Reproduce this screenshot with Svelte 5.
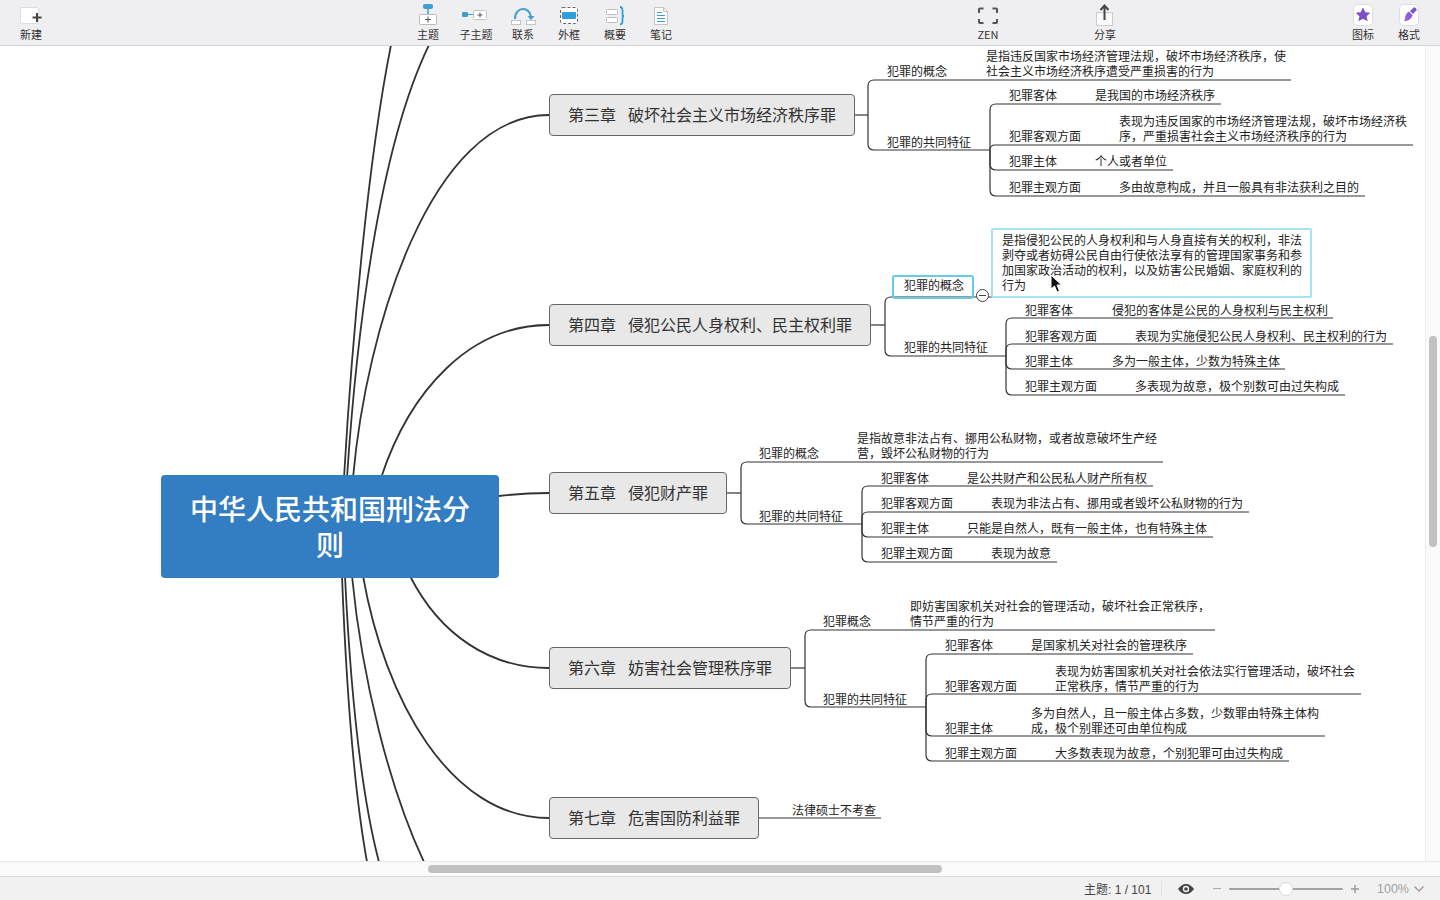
<script>
  const chapters = [
    { x: 549, w: 306, cy: 115, h: 42, a: '第三章', b: '破坏社会主义市场经济秩序罪', bx: 868,
      concept: { label: '犯罪的概念', x: 887, cy: 71, y: 80, tx: 986, end: 1291,
        lines: ['是指违反国家市场经济管理法规，破坏市场经济秩序，使', '社会主义市场经济秩序遭受严重损害的行为'] },
      common: { x: 887, cy: 142, y: 150, end: 990 },
      items: [
        { cy: 95, y: 104, tx: 1095, end: 1221, lines: ['是我国的市场经济秩序'] },
        { cy: 136, y: 145, tx: 1119, end: 1413, lines: ['表现为违反国家的市场经济管理法规，破坏市场经济秩', '序，严重损害社会主义市场经济秩序的行为'] },
        { cy: 161, y: 170, tx: 1095, end: 1173, lines: ['个人或者单位'] },
        { cy: 187, y: 196, tx: 1119, end: 1365, lines: ['多由故意构成，并且一般具有非法获利之目的'] }
      ] },
    { x: 549, w: 322, cy: 325, h: 42, a: '第四章', b: '侵犯公民人身权利、民主权利罪', bx: 885,
      concept: { label: '犯罪的概念', x: 904, cy: 285, y: 297, tx: 1002, end: 1302,
        lines: ['是指侵犯公民的人身权利和与人身直接有关的权利，非法', '剥夺或者妨碍公民自由行使依法享有的管理国家事务和参', '加国家政治活动的权利，以及妨害公民婚姻、家庭权利的', '行为'] },
      common: { x: 904, cy: 347, y: 356, end: 1006 },
      items: [
        { cy: 310, y: 318, tx: 1112, end: 1333, lines: ['侵犯的客体是公民的人身权利与民主权利'] },
        { cy: 336, y: 344, tx: 1135, end: 1393, lines: ['表现为实施侵犯公民人身权利、民主权利的行为'] },
        { cy: 361, y: 369, tx: 1112, end: 1285, lines: ['多为一般主体，少数为特殊主体'] },
        { cy: 386, y: 395, tx: 1135, end: 1345, lines: ['多表现为故意，极个别数可由过失构成'] }
      ] },
    { x: 549, w: 178, cy: 493, h: 42, a: '第五章', b: '侵犯财产罪', bx: 741,
      concept: { label: '犯罪的概念', x: 759, cy: 453, y: 462, tx: 857, end: 1163,
        lines: ['是指故意非法占有、挪用公私财物，或者故意破坏生产经', '营，毁坏公私财物的行为'] },
      common: { x: 759, cy: 516, y: 524, end: 862 },
      items: [
        { cy: 478, y: 486, tx: 967, end: 1153, lines: ['是公共财产和公民私人财产所有权'] },
        { cy: 503, y: 512, tx: 991, end: 1249, lines: ['表现为非法占有、挪用或者毁坏公私财物的行为'] },
        { cy: 528, y: 537, tx: 967, end: 1213, lines: ['只能是自然人，既有一般主体，也有特殊主体'] },
        { cy: 553, y: 562, tx: 991, end: 1057, lines: ['表现为故意'] }
      ] },
    { x: 549, w: 242, cy: 668, h: 42, a: '第六章', b: '妨害社会管理秩序罪', bx: 805,
      concept: { label: '犯罪概念', x: 823, cy: 621, y: 630, tx: 910, end: 1215,
        lines: ['即妨害国家机关对社会的管理活动，破坏社会正常秩序，', '情节严重的行为'] },
      common: { x: 823, cy: 699, y: 707, end: 926 },
      items: [
        { cy: 645, y: 654, tx: 1031, end: 1193, lines: ['是国家机关对社会的管理秩序'] },
        { cy: 686, y: 694, tx: 1055, end: 1361, lines: ['表现为妨害国家机关对社会依法实行管理活动，破坏社会', '正常秩序，情节严重的行为'] },
        { cy: 728, y: 736, tx: 1031, end: 1325, lines: ['多为自然人，且一般主体占多数，少数罪由特殊主体构', '成，极个别罪还可由单位构成'] },
        { cy: 753, y: 761, tx: 1055, end: 1289, lines: ['大多数表现为故意，个别犯罪可由过失构成'] }
      ] }
  ];
  const itemLabels = ['犯罪客体', '犯罪客观方面', '犯罪主体', '犯罪主观方面'];
  const CANVAS_TOP = 46;
  const LH = 15;
  const TEXT_NUDGE = 0.5;

  function elbow(x, from, y, end) {
    const d = y - from;
    const r = Math.min(6, Math.abs(d));
    const s = Math.sign(d) || 1;
    return `M${x} ${from}V${y - s * r}Q${x} ${y} ${x + r} ${y}H${end}`;
  }
  const treePaths = chapters.flatMap((c) => [
    `M${c.x + c.w} ${c.cy}H${c.bx}`,
    elbow(c.bx, c.cy, c.concept.y, c.concept.end),
    elbow(c.bx, c.cy, c.common.y, c.common.end),
    ...c.items.map((it) => elbow(c.common.end, c.common.y, it.y, it.end))
  ]);
  const texts = chapters.flatMap((c) => [
    { x: c.concept.x, cy: c.concept.cy, lines: [c.concept.label] },
    { x: c.concept.tx, cy: c.concept.cy, lines: c.concept.lines },
    { x: c.common.x, cy: c.common.cy, lines: ['犯罪的共同特征'] },
    ...c.items.flatMap((it, i) => [
      { x: c.common.end + 19, cy: it.cy, lines: [itemLabels[i]] },
      { x: it.tx, cy: it.cy, lines: it.lines }
    ])
  ]);
  texts.push({ x: 792, cy: 810, lines: ['法律硕士不考查'] });
  const boxes = [...chapters, { x: 549, w: 210, cy: 818, h: 42, a: '第七章', b: '危害国防利益罪' }];

  const mainPaths = [
    'M344 478C352 340 368 160 391 45',
    'M347 478C356 340 378 150 429 45',
    'M353 478C366 330 430 115 549 115',
    'M381 478C410 390 470 325 549 325',
    'M499 496C515 494 530 493 549 493',
    'M410 576C440 635 490 668 549 668',
    'M363 576C385 700 450 818 549 818',
    'M352 576C362 680 390 790 424 862',
    'M345 576C350 680 360 790 379 862',
    'M342 576C346 680 354 790 367 862'
  ];
  const textTop = (t) => t.cy - LH / 2 - (t.lines.length - 1) * LH - CANVAS_TOP - TEXT_NUDGE;
</script>

<div class="app">
  <header class="toolbar">
    <div class="tool first">
      <svg width="30" height="24" viewBox="0 0 30 24"><rect x="4.500" y="6.500" width="18" height="16" rx="1.500" fill="#fff" stroke="#ddd"/><path d="M21 12v9M16.500 16.500h9" stroke="#444" stroke-width="2"/></svg>
      <span>新建</span>
    </div>
    <div class="group g-insert">
      <div class="tool t1">
        <svg width="30" height="24" viewBox="0 0 30 24"><rect x="10" y="3" width="10" height="5" rx="2" fill="#3f9fd0"/><path d="M15 8v6" stroke="#3f9fd0" stroke-width="1.500"/><rect x="6.500" y="13.500" width="17" height="10" rx="1" fill="#fff" stroke="#bbb"/><path d="M15 15.500v6M12 18.500h6" stroke="#555"/></svg>
        <span>主题</span>
      </div>
      <div class="tool t2">
        <svg width="30" height="24" viewBox="0 0 30 24"><rect x="1" y="11" width="6" height="5" rx="1" fill="#3f9fd0"/><path d="M7 13.500h6" stroke="#3f9fd0"/><rect x="12.500" y="9.500" width="13" height="9" rx="1" fill="#fff" stroke="#c4c4c4"/><path d="M19 11.500v5M16.500 14h5" stroke="#555"/></svg>
        <span>子主题</span>
      </div>
      <div class="tool t3">
        <svg width="30" height="24" viewBox="0 0 30 24"><path d="M7 18C7 11 11 8 15 8s7 3 8 8" fill="none" stroke="#3f9fd0" stroke-width="2"/><path d="M19.500 15h7l-3.500 4z" fill="#3f9fd0"/><rect x="3.500" y="19.500" width="9" height="4" fill="#fff" stroke="#c4c4c4"/><rect x="18.500" y="19.500" width="9" height="4" fill="#fff" stroke="#c4c4c4"/></svg>
        <span>联系</span>
      </div>
      <div class="tool t4">
        <svg width="30" height="24" viewBox="0 0 30 24"><rect x="6.500" y="6.500" width="17" height="16" rx="2" fill="#fff" stroke="#666" stroke-dasharray="3 2"/><rect x="8" y="11" width="14" height="7" rx="1" fill="#2f9fdc"/></svg>
        <span>外框</span>
      </div>
      <div class="tool t5">
        <svg width="30" height="24" viewBox="0 0 30 24"><rect x="6.500" y="8.500" width="11" height="5" rx="1" fill="#fff" stroke="#bbb"/><rect x="6.500" y="16.500" width="11" height="5" rx="1" fill="#fff" stroke="#bbb"/><path d="M20 6c2 0 2.500 2 2.500 4v3c0 1 .5 2 1.500 2-1 0-1.500 1-1.500 2v3c0 2-.5 3.500-2.500 3.500" fill="none" stroke="#2f9fdc" stroke-width="1.800"/></svg>
        <span>概要</span>
      </div>
      <div class="tool t6">
        <svg width="30" height="24" viewBox="0 0 30 24"><path d="M8.500 6.500h9l4 4v13h-13z" fill="#fff" stroke="#c4c4c4"/><path d="M17.500 6.500v4h4" fill="none" stroke="#c4c4c4"/><path d="M11 11.500h5M11 14.500h8M11 17.500h8M11 20.500h8" stroke="#3f9fd0"/></svg>
        <span>笔记</span>
      </div>
    </div>
    <div class="tool zen">
      <svg width="30" height="24" viewBox="0 0 30 24"><path d="M6 12V8.500a1 1 0 0 1 1-1h3.500M19.500 7.500H23a1 1 0 0 1 1 1V12M24 18v3a1 1 0 0 1-1 1h-3.500M10.500 22H7a1 1 0 0 1-1-1v-3" fill="none" stroke="#555" stroke-width="2"/></svg>
      <span>ZEN</span>
    </div>
    <div class="tool share">
      <svg width="30" height="24" viewBox="0 0 30 24"><rect x="6.500" y="11.500" width="16" height="13" fill="#fafafa" stroke="#ccc"/><path d="M14.500 19V5M10.500 9l4-4.500 4 4.500" fill="none" stroke="#444" stroke-width="2"/></svg>
      <span>分享</span>
    </div>
    <div class="tool side">
      <svg width="30" height="24" viewBox="0 0 30 24"><rect x="5.500" y="3.500" width="19" height="21" rx="4" fill="#fff" stroke="#ddd"/><path d="M15 6.500l2.300 4.700 5 .6-3.700 3.400 1 5-4.600-2.500-4.600 2.500 1-5-3.700-3.400 5-.6z" fill="#7a4fc9"/></svg>
      <span>图标</span>
    </div>
    <div class="tool">
      <svg width="30" height="24" viewBox="0 0 30 24"><rect x="5.500" y="3.500" width="19" height="21" rx="4" fill="#fff" stroke="#ddd"/><path d="M20.500 6l2.500 2.500-4 4.500-3-3z" fill="#7a4fc9"/><path d="M15 10.500l3.500 3.500c-.5 3.500-4 6-8.500 6 1.500-1.500 1-3.500 1.500-5s1.500-3.800 3.500-4.500z" fill="#8d5fd6"/></svg>
      <span>格式</span>
    </div>
  </header>

  <main class="viewport">
    <svg class="wires" width="1440" height="815" viewBox="0 46 1440 815">
      {#each mainPaths as d}<path class="main" {d} />{/each}
      {#each treePaths as d}<path class="tree" {d} />{/each}
      <path class="tree" d="M759 818H881" />
    </svg>

    <div class="root">中华人民共和国刑法分则</div>

    {#each boxes as b}
      <div class="chapter" style="left:{b.x}px;top:{b.cy - b.h / 2 - CANVAS_TOP}px;width:{b.w}px;height:{b.h}px">
        <span>{b.a}</span><span class="name">{b.b}</span>
      </div>
    {/each}

    {#each texts as t}
      <div class="label" style="left:{t.x}px;top:{textTop(t)}px">
        {#each t.lines as line}<div>{line}</div>{/each}
      </div>
    {/each}

    <div class="sel sel-label"></div>
    <div class="sel sel-detail"></div>
    <div class="collapse"></div>

    <svg class="cursor" width="14" height="20" viewBox="0 0 14 20"><path d="M1 1v14l3.500-3 2.500 6 2.500-1-2.500-6h4.500z" fill="#111" stroke="#fff"/></svg>

    <div class="vtrack"><div class="vthumb"></div></div>
    <div class="htrack"><div class="hthumb"></div></div>
  </main>

  <footer class="status">
    <span class="count">主题: 1 / 101</span>
    <span class="divider"></span>
    <svg class="eye" width="18" height="12" viewBox="0 0 18 12"><path d="M1 6c2-3 5-5 8-5s6 2 8 5c-2 3-5 5-8 5S3 9 1 6z" fill="#444"/><circle cx="9" cy="6" r="3.200" fill="#f2f2f3"/><circle cx="9" cy="6" r="1.800" fill="#444"/></svg>
    <span class="zbtn minus"></span>
    <div class="slider"><div class="knob"></div></div>
    <svg class="plus" width="10" height="10" viewBox="0 0 10 10"><path d="M5 1v8M1 5h8" stroke="#999" stroke-width="1.400"/></svg>
    <span class="zoom">100%</span>
    <svg class="chev" width="12" height="8" viewBox="0 0 12 8"><path d="M1.500 1.500L6 6l4.500-4.500" fill="none" stroke="#999" stroke-width="1.300"/></svg>
  </footer>
</div>

<style>
  :global(body) { margin: 0; }
  .app {
    width: 1440px; height: 900px; display: flex; flex-direction: column; overflow: hidden;
    background: #fff; color: #2b2b2b;
    font-family: "Liberation Sans", "Noto Sans CJK SC", sans-serif;
  }
  .toolbar {
    height: 46px; box-sizing: border-box; flex: none; display: flex; padding-left: 8px;
    background: #efeff1; border-bottom: 1px solid #d4d4d6;
  }
  .tool {
    width: 46px; display: flex; flex-direction: column; align-items: center; flex: none;
    font-size: 11px; line-height: 14px; color: #333;
    font-family: "Noto Sans CJK SC", sans-serif;
  }
  .tool svg { flex: none; margin-top: 1px; overflow: visible; }
  .tool span { display: block; margin-top: 2px; }
  .group { display: flex; margin-left: 351px; }
  .t1 { width: 46px; } .t2 { width: 50px; } .t3 { width: 44px; }
  .t4 { width: 48px; } .t5 { width: 44px; } .t6 { width: 48px; }
  .zen { margin-left: 280px; }
  .share { margin-left: 71px; }
  .side { margin-left: 212px; }

  .viewport { flex: 1; position: relative; overflow: hidden; background: #fff; }
  .wires { position: absolute; left: 0; top: 0; }
  .wires path { fill: none; stroke: #333; }
  .main { stroke-width: 1.800; }
  .tree { stroke-width: 1.200; }

  .root {
    position: absolute; left: 161px; top: 429px; width: 338px; height: 103px;
    box-sizing: border-box; padding: 15px 26px; border-radius: 4px;
    background: #337dc2; color: #fff; text-align: center;
    font: 500 28px/36px "Noto Sans CJK SC", sans-serif;
  }
  .chapter {
    position: absolute; box-sizing: border-box; display: flex; align-items: center;
    padding: 0 0 2px 18px; border: 1px solid #666; border-radius: 4px; background: #e8e8e8;
    font: 16px/20px "Noto Sans CJK SC", sans-serif; color: #333; white-space: nowrap;
  }
  .name { margin-left: 12px; }
  .label {
    position: absolute; white-space: nowrap; color: #222;
    font: 12px/15px "Noto Sans CJK SC", sans-serif;
  }

  .sel { position: absolute; box-sizing: border-box; border: 2px solid #62cdeb; pointer-events: none; }
  .sel-label { left: 892px; top: 229px; width: 82px; height: 24px; border-radius: 3px; }
  .sel-detail { left: 991px; top: 182px; width: 321px; height: 70px; border-radius: 2px; border-color: #a5e2f3; }
  .collapse {
    position: absolute; left: 976px; top: 243px; width: 13px; height: 13px; box-sizing: border-box;
    border: 1px solid #444; border-radius: 50%; background: #fff;
  }
  .collapse::after {
    content: ""; position: absolute; left: 2px; right: 2px; top: 5px; height: 1px; background: #444;
  }
  .cursor { position: absolute; left: 1050px; top: 228px; }

  .vtrack {
    position: absolute; right: 0; top: 0; bottom: 0; width: 15px; box-sizing: border-box;
    background: #fafafa; border-left: 1px solid #ececec;
  }
  .vthumb {
    position: absolute; left: 3px; top: 290px; width: 8px; height: 211px; border-radius: 4px; background: #c1c1c1;
  }
  .htrack {
    position: absolute; left: 0; right: 0; bottom: 0; height: 15px; box-sizing: border-box;
    background: #fafafa; border-top: 1px solid #e8e8e8;
  }
  .hthumb {
    position: absolute; left: 428px; top: 3px; width: 514px; height: 8px; border-radius: 4px; background: #c1c1c1;
  }

  .status {
    height: 24px; box-sizing: border-box; flex: none; display: flex; align-items: center;
    padding-left: 1084px; background: #f1f1f2; border-top: 1px solid #d8d8d8;
    font-size: 12px;
  }
  .count { width: 67px; white-space: nowrap; color: #444; font-size: 12px; }
  .divider { width: 1px; height: 16px; background: #e4e4e4; margin-left: 10px; }
  .eye { margin-left: 15px; }
  .zbtn.minus { width: 8px; height: 1px; background: #aaa; margin-left: 18px; }
  .slider {
    position: relative; width: 114px; height: 2px; margin-left: 8px; border-radius: 1px; background: #a2a2a2;
  }
  .knob {
    position: absolute; left: 50px; top: -6px; width: 14px; height: 14px; box-sizing: border-box;
    border: 1px solid #d8d8d8; border-radius: 50%; background: #fff;
  }
  .plus { margin-left: 7px; }
  .zoom { margin-left: 17px; width: 32px; color: #a0a0a0; font-size: 12.500px; white-space: nowrap; }
  .chev { margin-left: 4px; }
</style>
